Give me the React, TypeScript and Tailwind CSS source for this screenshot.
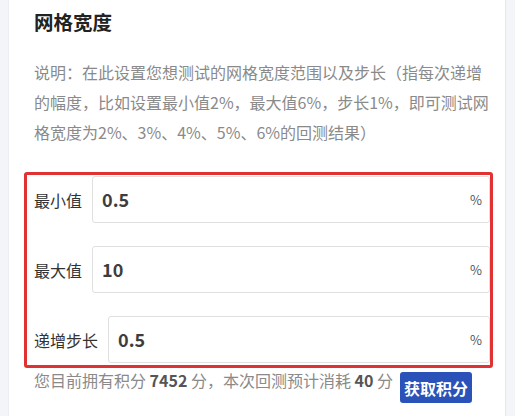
const font = { fontFamily: '"Noto Sans CJK SC", "Noto Sans", sans-serif' };

function RangeRow({ label, value }: { label: string; value: string }) {
    return (
        <div className="flex items-center">
            <span className="text-[16px] leading-5 text-[#333] mr-[10px] whitespace-nowrap">{label}</span>
            <div className="flex-1 h-[47px] flex items-center border border-[#e0e0e0] rounded-[3px] bg-white pl-[9px] pr-[7px]">
                <span className="flex-1 text-[18px] font-bold text-[#3d3d3d]">{value}</span>
                <span className="text-[13px] text-[#555]">%</span>
            </div>
        </div>
    );
}

export default function App() {
    return (
        <div className="w-[515px] h-[416px] flex bg-[#f4f5f9] overflow-hidden" style={font}>
            <div className="w-[9px] bg-[#f4f5f8] border-r border-[#eceef2]" />
            <div className="flex-1 bg-white pl-[15px] pr-[12px] border-r border-[#e6e8ee]">
                <h1 className="ml-[10px] mt-[8px] text-[19.5px] leading-7 font-bold text-[#222]">网格宽度</h1>
                <p className="ml-[10px] mr-[3px] mt-[21px] text-[16px] leading-[30px] text-[#8a8a8a]">
                    说明：在此设置您想测试的网格宽度范围以及步长（指每次递增的幅度，比如设置最小值2%，最大值6%，步长1%，即可测试网格宽度为2%、3%、4%、5%、6%的回测结果）
                </p>
                <div className="mt-[25px] border-[3px] border-[#e03232] rounded-[3px] pl-[7px] pt-[1px] pb-[2px] flex flex-col gap-[23px]">
                    <RangeRow label="最小值" value="0.5" />
                    <RangeRow label="最大值" value="10" />
                    <RangeRow label="递增步长" value="0.5" />
                </div>
                <div className="ml-[10px] mt-[2px] flex items-start text-[16px] leading-5 text-[#8a8a8a]">
                    <span className="whitespace-nowrap">
                        您目前拥有积分 <b className="text-[#555]">7452</b> 分，本次回测预计消耗 <b className="text-[#555]">40</b> 分
                    </span>
                    <button className="ml-[7px] mt-[2px] h-[31px] px-[4px] rounded-[3px] bg-[#2a52b8] text-white text-[16px] font-bold">
                        获取积分
                    </button>
                </div>
            </div>
            <div className="w-[9px]" />
        </div>
    );
}
